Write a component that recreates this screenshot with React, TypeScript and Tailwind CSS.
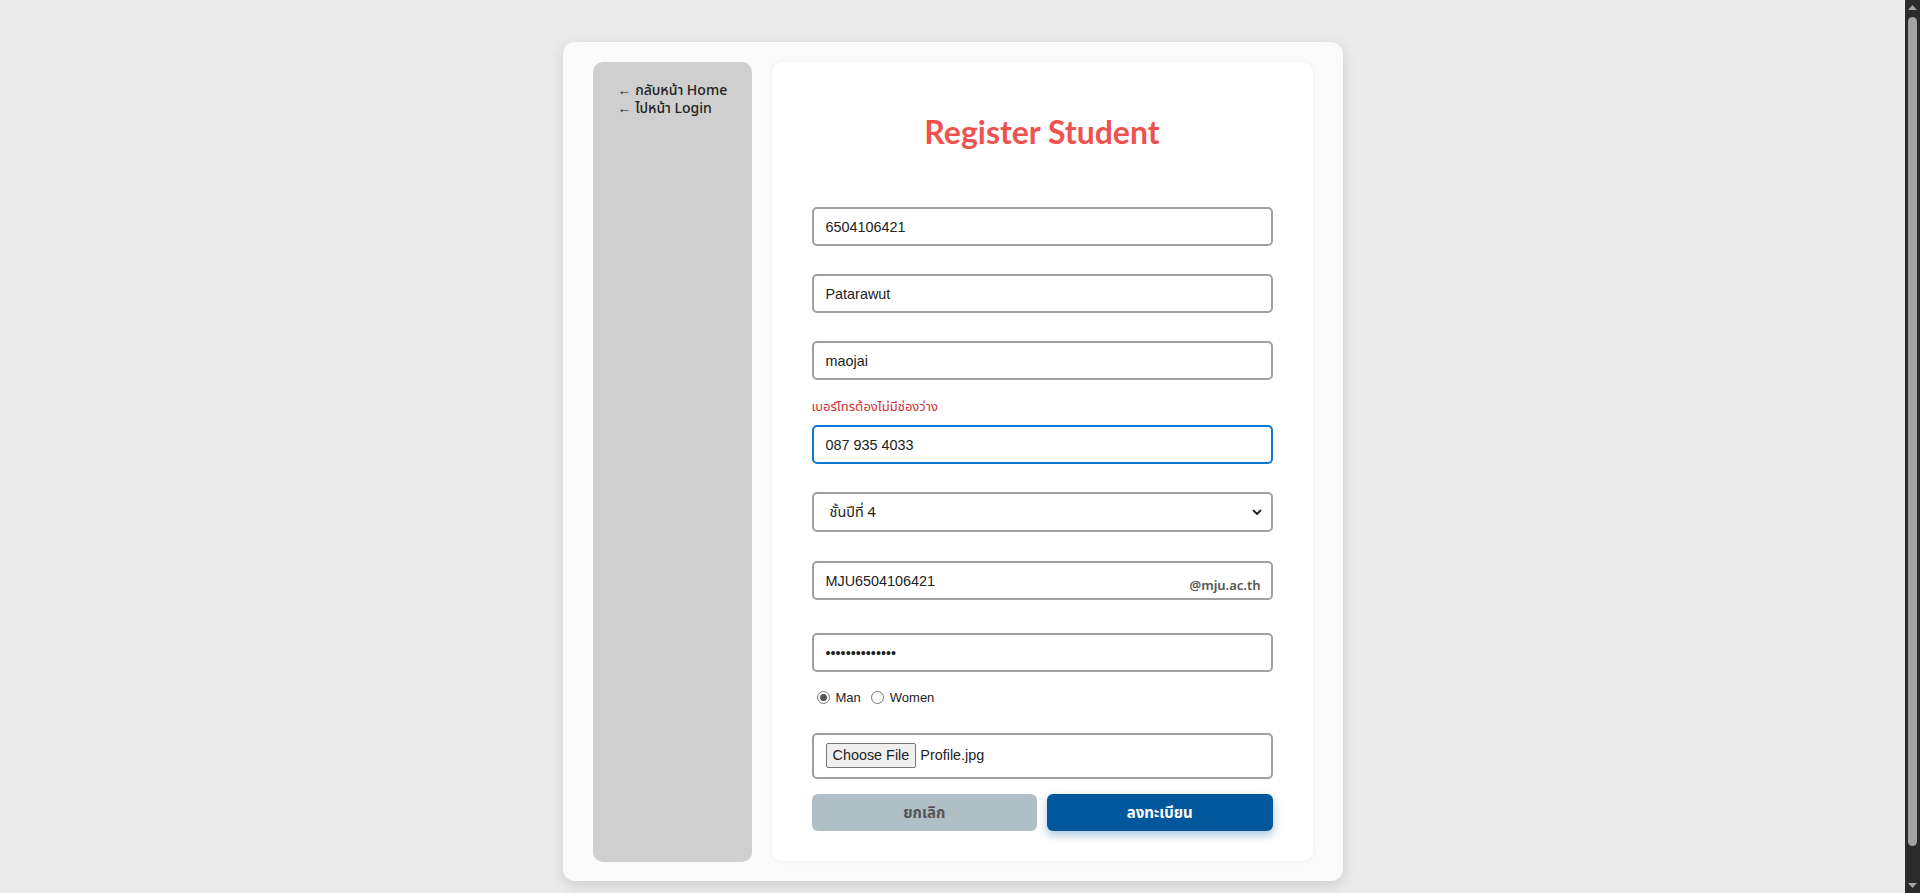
import React from 'react';

const thai = "font-['Noto_Sans','Noto_Sans_Thai',sans-serif]";
const arial = "font-['Liberation_Sans','Noto_Sans_Thai',Arial,sans-serif]";

const fieldBase =
  'w-full h-[39px] rounded-[5px] border-2 bg-white px-3 text-[14.4px] text-[#222] outline-none';
const fieldBox = `${fieldBase} border-[#a0a0a0]`;

function Radio({ checked, label }: { checked?: boolean; label: string }) {
  return (
    <label className="flex items-center gap-[6px]">
      <span className="flex h-[13px] w-[13px] items-center justify-center rounded-full border border-[#767676] bg-white">
        {checked && <span className="h-[7px] w-[7px] rounded-full bg-[#555]" />}
      </span>
      <span>{label}</span>
    </label>
  );
}

// browser scrollbar as seen in the screenshot
function FakeScrollbar() {
  return (
    <div className="flex w-[15px] shrink-0 flex-col items-center bg-[#2b2b2b]">
      <svg className="mt-[5px]" width="9" height="5" viewBox="0 0 9 5">
        <path d="M0 5 4.5 0 9 5z" fill="#a3a3a3" />
      </svg>
      <div className="mt-[7px] h-[829px] w-[9px] rounded-full bg-[#a3a3a3]" />
      <svg className="mt-auto mb-[5px]" width="9" height="5" viewBox="0 0 9 5">
        <path d="M0 0h9L4.5 5z" fill="#a3a3a3" />
      </svg>
    </div>
  );
}

export default function App() {
  return (
    <div className="flex h-screen overflow-hidden bg-[#ebebeb]">
      <div className="flex flex-1 justify-center pt-[42px]">
        <div className="flex h-[839px] w-[780px] gap-[20px] rounded-[12px] bg-[#fbfbfb] px-[30px] pt-[20px] pb-[19px] shadow-[0_4px_14px_rgba(0,0,0,0.13)]">
          {/* sidebar */}
          <aside className={`w-[159px] shrink-0 rounded-[10px] bg-[#cfcfcf] pl-[25px] pt-[19px] text-[14px] leading-[18px] font-medium text-[#222] ${thai}`}>
            <a className="block">← กลับหน้า Home</a>
            <a className="block">← ไปหน้า Login</a>
          </aside>

          {/* form */}
          <main className="flex h-[799px] w-[541px] flex-col rounded-[10px] bg-white px-[40px] shadow-[0_0_6px_rgba(0,0,0,0.06)]">
            <h1 className={`mt-[50px] text-center text-[32px] leading-[40px] font-bold text-[#ef5350] font-['Lato','Noto_Sans',sans-serif]`}>
              Register Student
            </h1>

            <input className={`${fieldBox} ${arial} mt-[55px]`} readOnly defaultValue="6504106421" />
            <input className={`${fieldBox} ${arial} mt-[28px]`} readOnly defaultValue="Patarawut" />
            <input className={`${fieldBox} ${arial} mt-[28px]`} readOnly defaultValue="maojai" />

            <p className={`mt-[18px] h-[17px] text-[13px] leading-[17px] text-[#d32f2f] ${thai}`}>
              เบอร์โทรต้องไม่มีช่องว่าง
            </p>
            <input
              className={`${fieldBase} ${arial} mt-[10px] border-[#0a78d0]`}
              readOnly
              defaultValue="087 935 4033"
            />

            <div className={`mt-[28px] flex h-[40px] items-center justify-between rounded-[5px] border-2 border-[#a0a0a0] pl-[16px] pr-[8px] text-[14.4px] text-[#222] ${thai}`}>
              <span>ชั้นปีที่ 4</span>
              <svg width="12" height="12" viewBox="0 0 12 12" fill="none">
                <path d="M2.5 4.5 6 8l3.5-3.5" stroke="#222" strokeWidth="1.8" strokeLinecap="round" strokeLinejoin="round" />
              </svg>
            </div>

            <div className={`${fieldBox} ${arial} mt-[29px] flex items-stretch justify-between pr-[10px]`}>
              <span className="pt-[8px]">MJU6504106421</span>
              <span className={`self-end pb-[3px] text-[13px] font-semibold text-[#555] ${thai}`}>@mju.ac.th</span>
            </div>

            <input
              type="password"
              className={`${fieldBox} ${arial} mt-[33px]`}
              readOnly
              defaultValue="patarawut12345"
            />

            <div className={`mt-[16px] flex items-center gap-[10px] pl-[5px] text-[13px] text-[#222] ${arial}`}>
              <Radio checked label="Man" />
              <Radio label="Women" />
            </div>

            <div className={`mt-[25px] flex h-[46px] items-center gap-[4px] rounded-[5px] border-2 border-[#a0a0a0] bg-white px-[12px] text-[14.4px] text-[#222] ${arial}`}>
              <span className="rounded-[2px] border border-[#767676] bg-[#efefef] px-[6px] py-[1px]">Choose File</span>
              <span>Profile.jpg</span>
            </div>

            <div className={`mt-[15px] flex gap-[10px] text-[15px] font-bold ${thai}`}>
              <button className="h-[37px] flex-1 rounded-[6px] bg-[#b0bec5] text-[#555]">ยกเลิก</button>
              <button className="h-[37px] flex-1 rounded-[6px] bg-[#01579b] text-white shadow-[0_4px_10px_rgba(1,87,155,0.35)]">
                ลงทะเบียน
              </button>
            </div>
          </main>
        </div>
      </div>
      <FakeScrollbar />
    </div>
  );
}
